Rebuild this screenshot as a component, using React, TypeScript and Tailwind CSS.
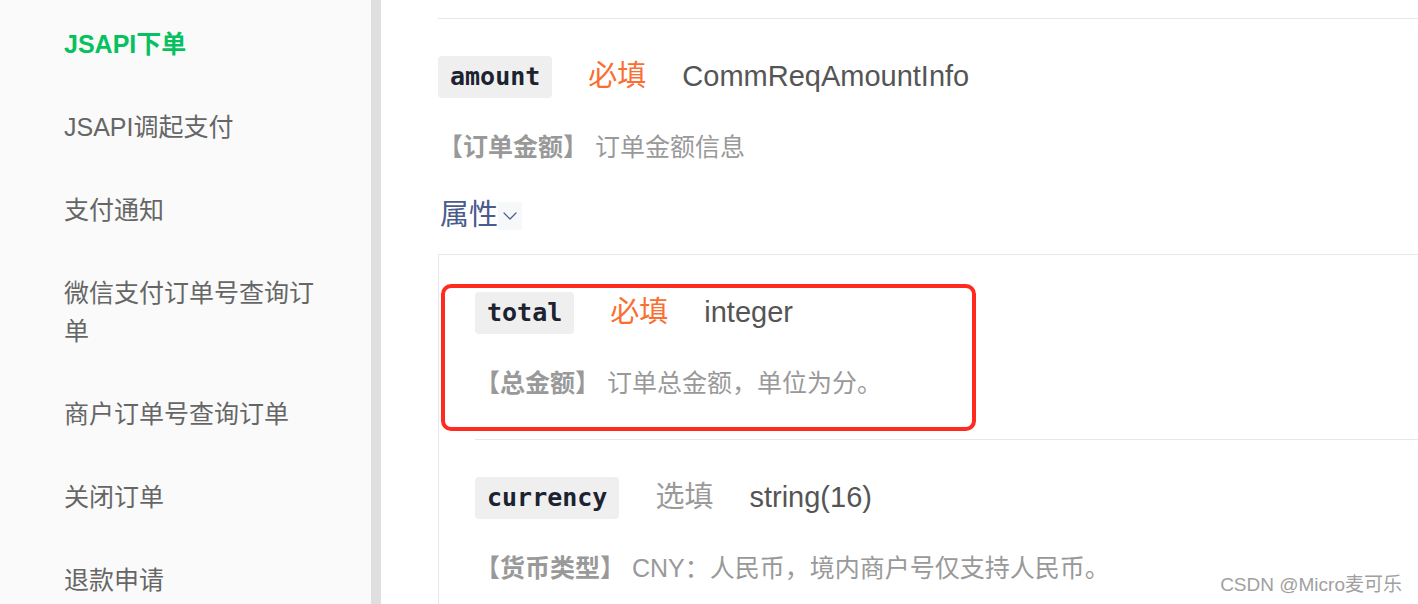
import { ChevronDown } from 'lucide-react'

const navItems = [
  'JSAPI下单',
  'JSAPI调起支付',
  '支付通知',
  '微信支付订单号查询订单',
  '商户订单号查询订单',
  '关闭订单',
  '退款申请',
]

type Field = {
  name: string
  required: boolean
  type: string
  label: string
  desc: string
}

function FieldHead({ f }: { f: Field }) {
  return (
    <div className="flex h-[42px] items-center gap-[36px]">
      <span className="flex h-[42px] items-center rounded-[4px] bg-[#efefef] px-[12px] font-['DejaVu_Sans_Mono',monospace] text-[25px] font-bold text-[#1c2230]">
        {f.name}
      </span>
      <span className={`text-[29px] ${f.required ? 'text-[#fa6e32]' : 'text-[#9a9a9a]'}`}>
        {f.required ? '必填' : '选填'}
      </span>
      <span className="text-[29px] text-[#555]">{f.type}</span>
    </div>
  )
}

function FieldDesc({ f }: { f: Field }) {
  return (
    <div className="mt-[31px] h-[36px] text-[25px] leading-[36px] text-[#999]">
      <span className="font-bold">【{f.label}】</span> {f.desc}
    </div>
  )
}

const subFields: Field[] = [
  { name: 'total', required: true, type: 'integer', label: '总金额', desc: '订单总金额，单位为分。' },
  {
    name: 'currency',
    required: false,
    type: 'string(16)',
    label: '货币类型',
    desc: 'CNY：人民币，境内商户号仅支持人民币。',
  },
]

export default function App() {
  const amount: Field = {
    name: 'amount',
    required: true,
    type: 'CommReqAmountInfo',
    label: '订单金额',
    desc: '订单金额信息',
  }
  return (
    <div className="relative flex h-[604px] w-[1418px] overflow-hidden bg-white font-['Liberation_Sans','Noto_Sans_CJK_SC',sans-serif]">
      {/* 左侧导航 */}
      <aside className="flex h-full w-[371px] shrink-0 bg-[#fafafa]">
        <ul className="w-[264px] pl-[64px] pt-[2.5px] box-content">
          {navItems.map((item, i) => (
            <li
              key={item}
              className={`py-[22.5px] text-[25px] leading-[38px] ${
                i === 0 ? 'font-bold text-[#07c160]' : 'text-[#666]'
              }`}
            >
              {item}
            </li>
          ))}
        </ul>
      </aside>
      {/* 滚动条 */}
      <div className="h-full w-[10px] shrink-0 bg-[#dfdfdf]" />

      {/* 正文 */}
      <main className="min-w-0 flex-1 pl-[57px]">
        <div className="h-[19px] border-b border-[#e6e7ec]" />

        <section className="pt-[37px]">
          <FieldHead f={amount} />
          <FieldDesc f={amount} />
          <div className="mt-[31px] flex h-[40px] items-center pl-[2px]">
            <span className="text-[29px] text-[#4b5c8c]">属性</span>
            <span className="flex h-[28px] w-[24px] items-center justify-center bg-[#f7f8fa]">
              <ChevronDown size={24} strokeWidth={1.2} className="text-[#4b5c8c]" />
            </span>
          </div>

          {/* 子属性 */}
          <div className="relative mt-[18px] border-l border-t border-[#e6e7ec] pl-[36px]">
            {subFields.map(f => (
              <div key={f.name} className="border-b border-[#e6e7ec] pt-[37px] pb-[38px]">
                <FieldHead f={f} />
                <FieldDesc f={f} />
              </div>
            ))}
            {/* 红框标注 */}
            <div className="absolute left-[2px] top-[29px] h-[147px] w-[535px] rounded-[10px] border-[4px] border-[#ff2b20]" />
          </div>
        </section>
      </main>

      {/* 水印 */}
      <div className="absolute bottom-[5px] right-[16px] text-[19px] text-[#a0a0a0]">CSDN @Micro麦可乐</div>
    </div>
  )
}
